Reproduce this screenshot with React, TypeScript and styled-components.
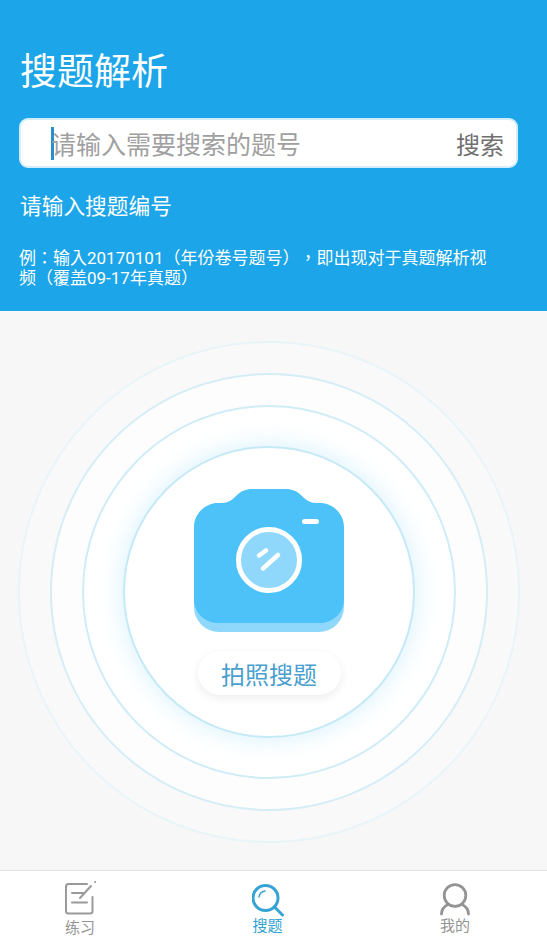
import React from "react";
import styled, { createGlobalStyle } from "styled-components";

const GlobalStyle = createGlobalStyle`
  html, body {
    margin: 0;
    padding: 0;
    height: 100%;
    background: #f7f7f7;
    font-family: Roboto, "Noto Sans CJK SC", sans-serif;
  }
  * {
    box-sizing: border-box;
  }
`;

function App() {
  return (
    <Page>
      <GlobalStyle />
      <Header>
        <Title>搜题解析</Title>
        <SearchBox>
          <Caret />
          <Placeholder>请输入需要搜索的题号</Placeholder>
          <SearchButton>搜索</SearchButton>
        </SearchBox>
        <Hint>请输入搜题编号</Hint>
        <Example>例：输入20170101（年份卷号题号），即出现对于真题解析视频（覆盖09-17年真题）</Example>
      </Header>

      <Main>
        <Ring $size={502} $color="#e9f4f9" $fill="#f9f9fa">
          <Ring $size={438} $color="#d5edf7" $fill="#fdfdfd">
            <Ring $size={374} $color="#cfecf7" $fill="#fff">
              <InnerRing>
                <CameraIcon />
                <PhotoButton>拍照搜题</PhotoButton>
              </InnerRing>
            </Ring>
          </Ring>
        </Ring>
      </Main>

      <TabBar>
        <Tab>
          <NoteIcon />
          <TabLabel $drop={2}>练习</TabLabel>
        </Tab>
        <Tab $active>
          <SearchIcon />
          <TabLabel>搜题</TabLabel>
        </Tab>
        <Tab>
          <UserIcon />
          <TabLabel>我的</TabLabel>
        </Tab>
      </TabBar>
    </Page>
  );
}

export default App;

function CameraIcon() {
  return (
    <svg width="150" height="143" viewBox="0 0 150 143">
      <rect y="30" width="150" height="113" rx="25" fill="#8fd8fb" />
      <path
        d="M24 14H28C34 14 38 11 42 7C47 2 52 0 58 0H92C98 0 103 2 108 7C112 11 116 14 122 14H126C139 14 150 25 150 38V110C150 124 139 134 126 134H24C11 134 0 124 0 110V38C0 25 11 14 24 14Z"
        fill="#4cc2f8"
      />
      <circle cx="75" cy="71" r="30.5" fill="#8fd8fb" stroke="#fff" strokeWidth="5" />
      <path d="M65 66.5L72 61.5M69 79.5L84 66" stroke="#fff" strokeWidth="4.5" strokeLinecap="round" fill="none" />
      <rect x="108" y="30" width="17" height="5" rx="2.5" fill="#fff" />
    </svg>
  );
}

function NoteIcon() {
  return (
    <svg width="32" height="38" viewBox="0 0 32 38" fill="none" stroke="#9a9a9a" strokeWidth="2" strokeLinecap="round">
      <path d="M23 5H4.500C3 5 2 6 2 7.500V32C2 33.500 3 34.500 4.500 34.500H26C27.500 34.500 28.500 33.500 28.500 32V18" />
      <path d="M8 14H20M8 23.500H23M16 19L27 7" />
      <circle cx="31" cy="3" r="0.5" fill="#9a9a9a" strokeWidth="1" />
    </svg>
  );
}

function SearchIcon() {
  return (
    <svg width="32" height="38" viewBox="0 0 32 38" fill="none" stroke="#35a3d3" strokeLinecap="round">
      <circle cx="13.500" cy="19" r="12.500" strokeWidth="3" />
      <path d="M23 28.500L30.500 36" strokeWidth="3" />
      <path d="M7 18C7.500 14.500 10 12.500 13 12" strokeWidth="1.500" />
    </svg>
  );
}

function UserIcon() {
  return (
    <svg width="32" height="38" viewBox="0 0 32 38" fill="none" stroke="#949494" strokeWidth="2.800" strokeLinecap="round">
      <circle cx="16" cy="16.500" r="10.800" />
      <path d="M9 25.500C5 27.500 2.500 30.500 2.500 35M23 25.500C27 27.500 29.500 30.500 29.500 35" />
    </svg>
  );
}

const Page = styled.div`
  display: flex;
  flex-direction: column;
  width: 547px;
  height: 945px;
  overflow: hidden;
`;

const Header = styled.div`
  display: flex;
  flex-direction: column;
  height: 311px;
  padding: 50px 29px 0 19px;
  background: #1ca5e8;
  color: #fff;
`;

const Title = styled.div`
  margin-left: 1px;
  font-size: 37px;
  line-height: 46px;
`;

const SearchBox = styled.div`
  display: flex;
  align-items: center;
  height: 50px;
  margin-top: 22px;
  padding: 0 12px 0 30px;
  border: 2px solid #d3edfb;
  border-radius: 9px;
  background: #fff;
`;

const Caret = styled.div`
  flex: none;
  width: 3px;
  height: 33px;
  background: #2a8fd0;
`;

const Placeholder = styled.div`
  flex: 1;
  margin-left: -3px;
  font-size: 25px;
  color: #a0a0a0;
`;

const SearchButton = styled.div`
  font-size: 24px;
  color: #707070;
`;

const Hint = styled.div`
  margin-top: 23px;
  margin-left: 1px;
  font-size: 21.700px;
  line-height: 32px;
`;

const Example = styled.div`
  width: 472px;
  margin-top: 25px;
  font-family: Roboto, "Noto Sans CJK TC", sans-serif;
  font-size: 17px;
  line-height: 20px;
  text-spacing-trim: space-all;
`;

const Main = styled.div`
  flex: 1;
  display: flex;
  justify-content: center;
  align-items: center;
  padding: 3px 9px 0 0;
  background: #f7f7f7;
`;

const Ring = styled.div<{ $size: number; $color: string; $fill: string }>`
  flex: none;
  display: flex;
  justify-content: center;
  align-items: center;
  width: ${(p) => p.$size}px;
  height: ${(p) => p.$size}px;
  border: 2px solid ${(p) => p.$color};
  border-radius: 50%;
  background: ${(p) => p.$fill};
`;

const InnerRing = styled.div`
  flex: none;
  display: flex;
  flex-direction: column;
  justify-content: center;
  align-items: center;
  gap: 19px;
  width: 292px;
  height: 292px;
  border: 2px solid #c6e9f6;
  border-radius: 50%;
  background: #fff;
  box-shadow: 0 0 24px rgba(120, 210, 245, 0.32);
`;

const PhotoButton = styled.div`
  display: flex;
  justify-content: center;
  align-items: center;
  width: 143px;
  height: 44px;
  border-radius: 22px;
  background: #fff;
  box-shadow: 0 3px 10px rgba(0, 0, 0, 0.08);
  font-size: 24px;
  color: #4a9fcf;
`;

const TabBar = styled.div`
  flex: none;
  display: flex;
  justify-content: space-between;
  height: 75px;
  padding: 8px 62px 0 50px;
  border-top: 1px solid #e2e2e2;
  background: #fff;
`;

const Tab = styled.div<{ $active?: boolean }>`
  display: flex;
  flex-direction: column;
  align-items: center;
  width: 60px;
  color: ${(p) => (p.$active ? "#35a3d3" : "#949494")};
`;

const TabLabel = styled.div<{ $drop?: number }>`
  margin-top: ${(p) => p.$drop ?? 0}px;
  font-size: 15px;
  line-height: 18px;
`;
